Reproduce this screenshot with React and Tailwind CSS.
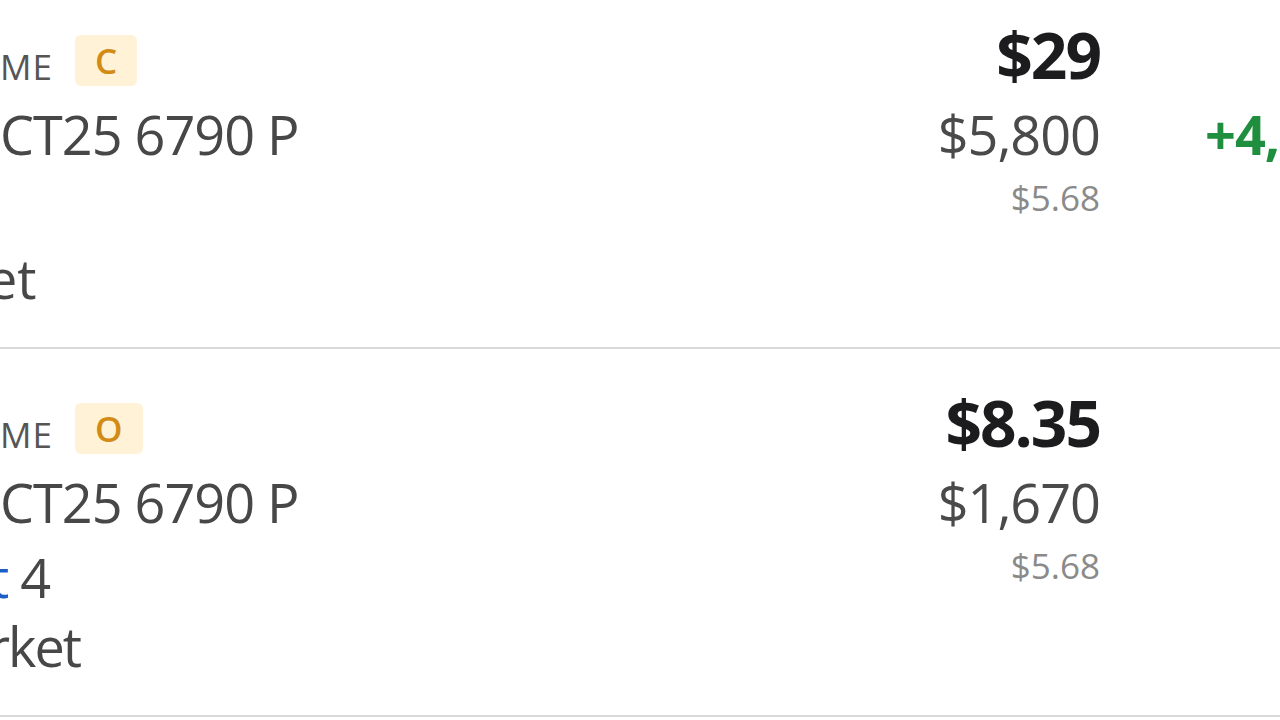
import React from "react";

const positions = [
  {
    id: 1,
    exchange: "ME",
    badge: "C",
    contract: "CT25 6790 P",
    detail: null,
    orderType: "et",
    orderCut: "-ml-[13px]",
    price: "$29",
    value: "$5,800",
    underlying: "$5.68",
    qty: "10.00",
    pnl: "+4,210",
  },
  {
    id: 2,
    exchange: "ME",
    badge: "O",
    contract: "CT25 6790 P",
    detail: { link: "t", rest: " 4" },
    orderType: "rket",
    orderCut: "-ml-[12px] tracking-[-2px]",
    price: "$8.35",
    value: "$1,670",
    underlying: "$5.68",
    qty: "10.00",
    pnl: null,
  },
];

// One position row in the list (left edge is scrolled off screen)
const PositionRow = ({ item }) => (
  <div className="flex h-[368px] w-[1405px] border-b-2 border-[#d9d9d9] pt-[42px]">
    {/* Left: contract info */}
    <div className="flex flex-1 flex-col overflow-hidden pt-[12px]">
      <div className="flex items-end gap-[22px]">
        <span className="mb-[2px] text-[35px] leading-none tracking-[1px] text-[#555555]">
          {item.exchange}
        </span>
        <span className="flex h-[51px] items-center rounded-[6px] bg-[#fff2d6] px-[20px] text-[35px] font-semibold leading-none text-[#d28b14]">
          {item.badge}
        </span>
      </div>
      <div className="mt-[21px] text-[54px] leading-none tracking-[-1px] text-[#474747]">
        {item.contract}
      </div>
      <div className="mt-[21px] h-[54px] text-[54px] leading-none text-[#474747]">
        {item.detail && (
          <div className="-ml-[10px]">
            <span className="text-[#1b5fc6]">{item.detail.link}</span>
            <span className="tracking-[-3px]"> </span>
            {item.detail.rest.trim()}
          </div>
        )}
      </div>
      <div className="mt-[15px] text-[54px] leading-none text-[#474747]">
        <div className={item.orderCut}>{item.orderType}</div>
      </div>
    </div>

    {/* Middle: price column */}
    <div className="flex shrink-0 flex-col items-end">
      <span className="text-[64px] font-bold leading-none tracking-[-2px] text-[#1c1c1e]">
        {item.price}
      </span>
      <span className="mt-[20px] text-[54px] leading-none tracking-[-1px] text-[#4a4a4a]">
        {item.value}
      </span>
      <span className="mt-[19px] text-[35px] leading-none text-[#8a8a8a]">
        {item.underlying}
      </span>
    </div>

    {/* Right: qty / P&L column, mostly off screen */}
    <div className="ml-[105px] flex w-[200px] shrink-0 flex-col items-start">
      <span className="ml-[71px] mt-[13px] text-[50px] leading-none text-[#333333]">
        {item.qty}
      </span>
      {item.pnl && (
        <span className="mt-[21px] text-[54px] font-bold leading-none tracking-[-1px] text-[#1f8f3f]">
          {item.pnl}
        </span>
      )}
    </div>
  </div>
);

export default function App() {
  return (
    <div className="h-[720px] w-[1280px] overflow-hidden bg-white font-['Open_Sans',sans-serif]">
      <div className="-mt-[19px]">
        {positions.map((p) => (
          <PositionRow key={p.id} item={p} />
        ))}
      </div>
    </div>
  );
}
